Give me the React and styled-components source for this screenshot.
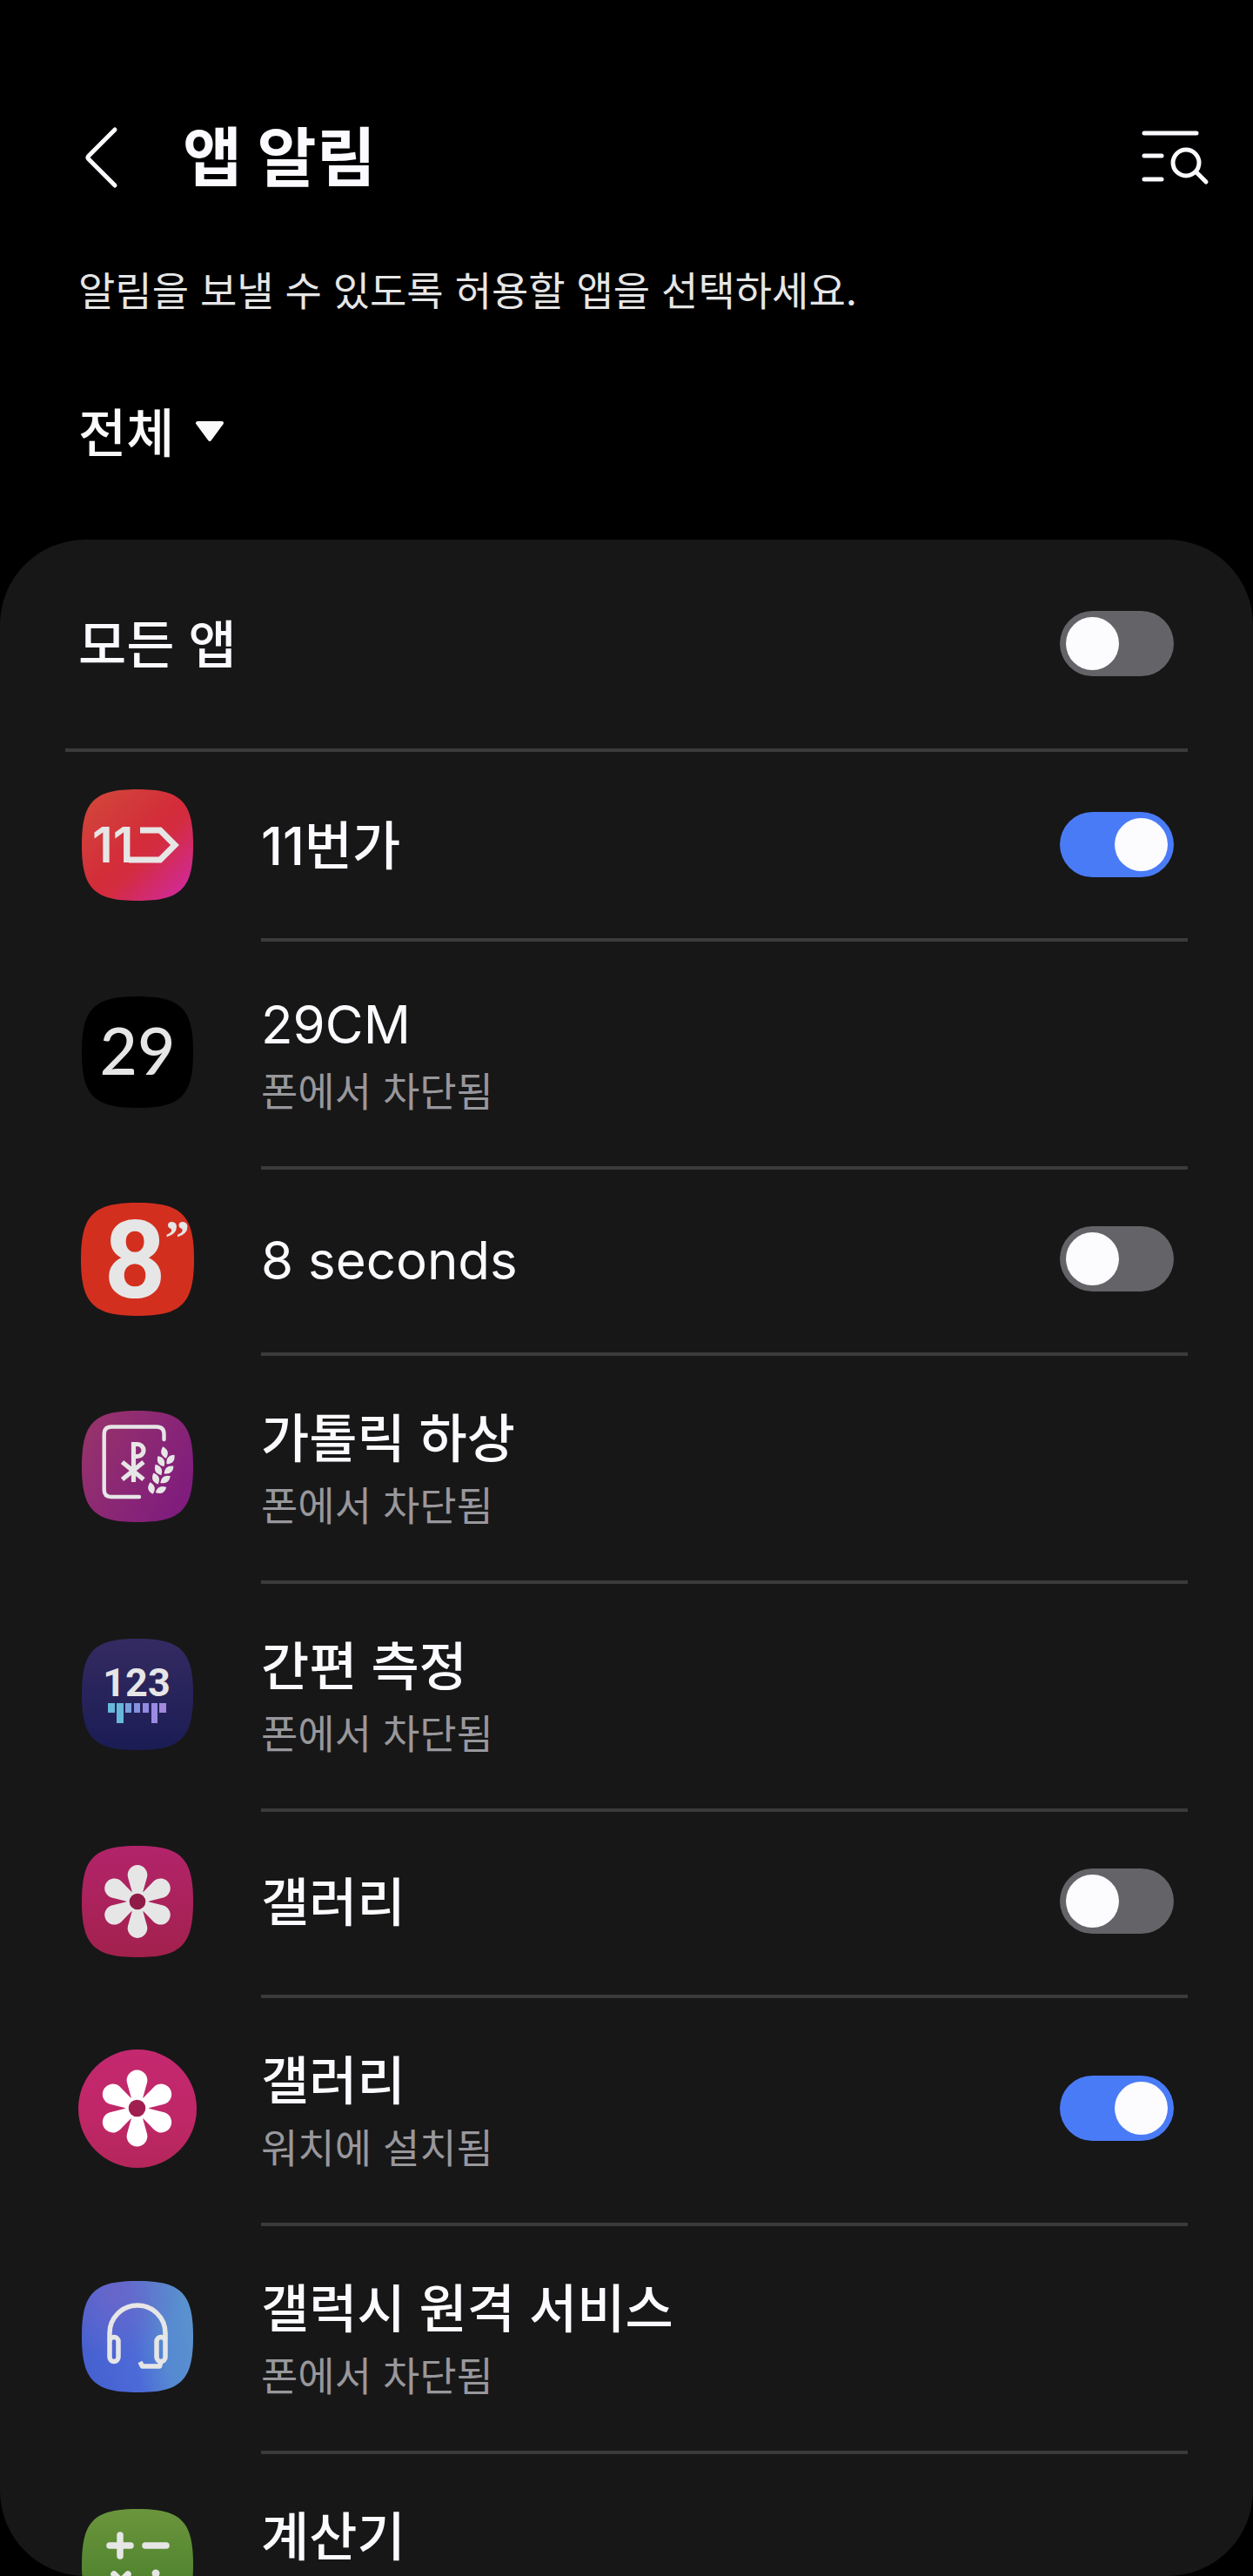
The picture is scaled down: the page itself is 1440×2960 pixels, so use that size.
import React, { useState } from 'react';
import styled, { createGlobalStyle } from 'styled-components';

const GlobalStyle = createGlobalStyle`
  *, *::before, *::after { box-sizing: border-box; }
  body {
    margin: 0;
    background: #000;
    color: #fbfaff;
    font-family: Inter, "Noto Sans CJK KR", sans-serif;
  }
`;

const Screen = styled.div`
  display: flex;
  flex-direction: column;
  height: 100vh;
  background: #000;
`;

const Header = styled.header`
  display: flex;
  align-items: center;
  gap: 72px;
  padding: 120px 48px 0 96px;
`;

const IconButton = styled.button`
  display: flex;
  padding: 0;
  border: 0;
  background: none;
  color: #fbfaff;
  cursor: pointer;
`;

const Title = styled.h1`
  flex: 1;
  margin: 0;
  font-size: 74px;
  font-weight: 700;
  line-height: 122px;
`;

const Description = styled.p`
  margin: 0;
  padding: 58px 90px 0;
  color: #e6e6e6;
  font-size: 46px;
  line-height: 68px;
`;

const Filter = styled.label`
  display: flex;
  align-items: center;
  align-self: flex-start;
  gap: 24px;
  padding: 84px 90px 76px;
`;

const FilterSelect = styled.select`
  appearance: none;
  field-sizing: content;
  padding: 0;
  border: 0;
  background: none;
  color: #fafafa;
  font-family: inherit;
  font-size: 60px;
  font-weight: 500;
  line-height: 92px;
`;

const Panel = styled.main`
  flex: 1;
  min-height: 0;
  overflow-y: auto;
  scrollbar-width: none;
  border-radius: 98px;
  background: #171717;
`;

const MasterRow = styled.div`
  display: flex;
  align-items: center;
  justify-content: space-between;
  height: 240px;
  padding: 0 91px 2px 90px;
`;

const Rule = styled.hr`
  height: 4px;
  margin: 0 75px;
  border: 0;
  background: #3b3b3b;
`;

const List = styled.ul`
  margin: 0;
  padding: 0;
  list-style: none;
`;

const Row = styled.li`
  display: flex;
  gap: 74px;
  height: ${(p) => (p.$tall ? 262 : 214)}px;
  padding: 0 75px 0 90px;
`;

const IconCell = styled.div`
  display: flex;
  flex: none;
  align-items: center;
  justify-content: center;
  width: 136px;
`;

const RowBody = styled.div`
  display: flex;
  flex: 1;
  align-items: center;
  justify-content: space-between;
  padding: 0 16px 6px 0;
  border-top: 4px solid #3b3b3b;

  ${Row}:first-child & {
    border-top-color: transparent;
  }
`;

const Label = styled.label`
  display: block;
  padding-top: 4px;
  font-size: 60px;
  font-weight: ${(p) => (p.$latin ? 400 : 500)};
  line-height: 88px;
`;

const Note = styled.p`
  min-height: 66px;
  margin: 0;
  color: #98979c;
  font-size: 46px;
  line-height: 66px;
`;

const Switch = styled.input`
  appearance: none;
  display: flex;
  flex: none;
  width: 131px;
  height: 75px;
  margin: 0;
  padding: 7px;
  border-radius: 38px;
  background: #646367;
  cursor: pointer;

  &::before {
    content: "";
    width: 61px;
    height: 61px;
    border-radius: 50%;
    background: #fcfcff;
  }

  &:checked {
    justify-content: flex-end;
    background: #4a7bf7;
  }
`;

const Art = styled.svg`
  display: block;
  flex: none;
  overflow: visible;
`;

const SQUIRCLE =
  'M64 0C114 0 128 14 128 64C128 114 114 128 64 128C14 128 0 114 0 64C0 14 14 0 64 0Z';

function Tile({ size = 128, fill, children }) {
  return (
    <Art width={size} height={size} viewBox="0 0 128 128" aria-hidden="true">
      {children[0]}
      <path d={SQUIRCLE} fill={fill} />
      {children.slice(1)}
    </Art>
  );
}

function ElevenStreetIcon() {
  return (
    <Tile fill="url(#eleven)">
      <defs key="d">
        <linearGradient id="eleven" x1="0.1" y1="0.1" x2="0.9" y2="0.9">
          <stop offset="0" stopColor="#d2443a" />
          <stop offset="0.5" stopColor="#d32c3a" />
          <stop offset="0.62" stopColor="#d32c40" />
          <stop offset="1" stopColor="#d12a93" />
        </linearGradient>
      </defs>
      <text key="t" x="12" y="84" fill="#e6e6e6" fontFamily="Inter, sans-serif" fontSize="56" fontWeight="600">11</text>
      <path key="p" d="M67 47H90L107 64L90 81H54" fill="none" stroke="#e6e6e6" strokeWidth="7" />
    </Tile>
  );
}

function TwentyNineIcon() {
  return (
    <Tile fill="#000">
      <defs key="d" />
      <text key="t" x="64" y="90" textAnchor="middle" fill="#e6e6e6" fontFamily="Lato, sans-serif" fontSize="75" fontWeight="500">29</text>
    </Tile>
  );
}

function EightSecondsIcon() {
  return (
    <Tile size={130} fill="#d32f1f">
      <defs key="d" />
      <text key="a" x="61" y="107" textAnchor="middle" fill="#e6e6e6" fontFamily="Roboto, sans-serif" fontSize="122" fontWeight="700">8</text>
      <text key="b" x="109" y="59" textAnchor="middle" fill="#e6e6e6" fontFamily="'Liberation Serif', serif" fontSize="56" fontWeight="700">”</text>
    </Tile>
  );
}

const LEAVES = [
  [95, 48, 75],
  [91, 58, 60],
  [102, 56, -50],
  [88, 68, 62],
  [100, 68, -38],
  [85, 78, 68],
  [96, 79, -34],
  [80, 89, 78],
  [91, 91, -26],
];

function CatholicIcon() {
  return (
    <Tile fill="url(#catholic)">
      <defs key="d">
        <linearGradient id="catholic" x1="0" y1="0.2" x2="1" y2="0.8">
          <stop offset="0" stopColor="#97336b" />
          <stop offset="1" stopColor="#7e1b7e" />
        </linearGradient>
      </defs>
      <g key="g" fill="none" stroke="#e6e6e6" strokeLinecap="round">
        <path d="M94.500 33V27Q94.500 18.500 86 18.500H34Q25.700 18.500 25.700 27V91Q25.700 99 34 99H66" strokeWidth="4.400" />
        <path d="M59.500 82V38.500H64A7 7 0 0 1 64 52.500H60" strokeWidth="5.200" strokeLinecap="butt" />
        <path d="M46.500 59L71 79M71 59L46.500 79" strokeWidth="5.200" strokeLinecap="butt" />
      </g>
      <g key="l" fill="#e6e6e6">
        {LEAVES.map(([x, y, a]) => (
          <path key={`${x}-${y}`} d="M-7 0Q0 -7.500 7 0Q0 7.500 -7 0Z" transform={`translate(${x} ${y}) rotate(${a})`} />
        ))}
      </g>
    </Tile>
  );
}

const BARS = [
  [30, 8, 11, '#66b9d8'],
  [40, 8, 23, '#66b9d8'],
  [50, 7, 11, '#78a0dc'],
  [60, 7, 11, '#8590e0'],
  [70, 7, 11, '#908be0'],
  [80, 7, 23, '#9a8be0'],
  [89, 8, 11, '#a388dc'],
];

function MeasureIcon() {
  return (
    <Tile fill="url(#measure)">
      <defs key="d">
        <linearGradient id="measure" x1="0" y1="0" x2="0" y2="1">
          <stop offset="0" stopColor="#342b62" />
          <stop offset="1" stopColor="#1b1c54" />
        </linearGradient>
      </defs>
      <text key="t" x="63" y="66" textAnchor="middle" fill="#e6e6e6" fontFamily="Roboto, sans-serif" fontSize="45" fontWeight="700">123</text>
      <g key="g">
        {BARS.map(([x, w, h, fill]) => (
          <rect key={x} x={x} y="74" width={w} height={h} fill={fill} />
        ))}
      </g>
    </Tile>
  );
}

function Flower({ petals, core }) {
  return (
    <g>
      <g fill={petals}>
        {[0, 60, 120, 180, 240, 300].map((a) => (
          <path key={a} d="M-6.200 -11L-11 -28A11.300 11.300 0 1 1 11 -28L6.200 -11Z" transform={`rotate(${a})`} />
        ))}
        <circle r="13" />
      </g>
      <circle r="9.300" fill={core} />
    </g>
  );
}

function GalleryIcon() {
  return (
    <Tile fill="url(#gallery)">
      <defs key="d">
        <linearGradient id="gallery" x1="0" y1="0" x2="0" y2="1">
          <stop offset="0" stopColor="#b2246a" />
          <stop offset="0.5" stopColor="#ab225c" />
          <stop offset="1" stopColor="#a2214c" />
        </linearGradient>
      </defs>
      <g key="g" transform="translate(64 64)">
        <Flower petals="#e6e6e6" core="#8f1c46" />
      </g>
    </Tile>
  );
}

function WatchGalleryIcon() {
  return (
    <Art width="136" height="136" viewBox="0 0 136 136" aria-hidden="true">
      <defs>
        <linearGradient id="watch" x1="0" y1="0" x2="0" y2="1">
          <stop offset="0" stopColor="#c4286f" />
          <stop offset="0.6" stopColor="#bf2767" />
          <stop offset="1" stopColor="#b4265a" />
        </linearGradient>
      </defs>
      <circle cx="68" cy="68" r="68" fill="url(#watch)" />
      <g transform="translate(67.500 67.500) scale(1.050)">
        <Flower petals="#fff" core="#a11f50" />
      </g>
    </Art>
  );
}

function RemoteIcon() {
  return (
    <Tile fill="url(#remote)">
      <defs key="d">
        <linearGradient id="remote" x1="0" y1="0.600" x2="1" y2="0.400">
          <stop offset="0" stopColor="#4660d0" />
          <stop offset="0.45" stopColor="#4d6bd8" />
          <stop offset="0.7" stopColor="#5588d2" />
          <stop offset="1" stopColor="#5a92ce" />
        </linearGradient>
        <radialGradient id="remoteGlow" cx="0.3" cy="0.1" r="0.6">
          <stop offset="0" stopColor="#6c66c8" stopOpacity="0.9" />
          <stop offset="1" stopColor="#6c66c8" stopOpacity="0" />
        </radialGradient>
      </defs>
      <path key="o" d={SQUIRCLE} fill="url(#remoteGlow)" />
      <g key="g" fill="none" stroke="#e6e6e6" strokeWidth="5.500" strokeLinejoin="round">
        <path d="M32 68V60A32 32 0 0 1 96 60V68" />
        <rect x="32" y="64.500" width="10" height="28" rx="5" />
        <rect x="86" y="64.500" width="10" height="28" rx="5" />
        <path d="M91 92L89.500 98H69.500L67 93" />
      </g>
    </Tile>
  );
}

function CalculatorIcon() {
  return (
    <Tile fill="url(#calc)">
      <defs key="d">
        <linearGradient id="calc" x1="0" y1="0" x2="0" y2="1">
          <stop offset="0" stopColor="#6b953c" />
          <stop offset="1" stopColor="#427a28" />
        </linearGradient>
      </defs>
      <path
        key="p"
        d="M44 30V54M32 42H56M73 42H97M37 75L53 91M53 75L37 91M73 85H97"
        stroke="#e6e6e6"
        strokeWidth="7.500"
        strokeLinecap="round"
      />
      <circle key="a" cx="85" cy="74" r="4.500" fill="#e6e6e6" />
      <circle key="b" cx="85" cy="96" r="4.500" fill="#e6e6e6" />
    </Tile>
  );
}

const APPS = [
  { id: 'eleven-street', name: '11번가', icon: ElevenStreetIcon, on: true },
  { id: 'twentynine', name: '29CM', latin: true, note: '폰에서 차단됨', icon: TwentyNineIcon },
  { id: 'eight-seconds', name: '8 seconds', latin: true, icon: EightSecondsIcon, on: false },
  { id: 'catholic', name: '가톨릭 하상', note: '폰에서 차단됨', icon: CatholicIcon },
  { id: 'measure', name: '간편 측정', note: '폰에서 차단됨', icon: MeasureIcon },
  { id: 'gallery', name: '갤러리', icon: GalleryIcon, on: false },
  { id: 'watch-gallery', name: '갤러리', note: '워치에 설치됨', icon: WatchGalleryIcon, on: true },
  { id: 'remote', name: '갤럭시 원격 서비스', note: '폰에서 차단됨', icon: RemoteIcon },
  { id: 'calculator', name: '계산기', note: '', icon: CalculatorIcon },
];

function Toggle({ id, initial }) {
  const [on, setOn] = useState(initial);
  return (
    <Switch id={id} type="checkbox" role="switch" checked={on} onChange={() => setOn(!on)} />
  );
}

function AppRow({ app }) {
  const Icon = app.icon;
  const switchable = app.on !== undefined;
  const hasNote = app.note !== undefined;
  return (
    <Row $tall={hasNote}>
      <IconCell>
        <Icon />
      </IconCell>
      <RowBody>
        <div>
          <Label
            as={switchable ? 'label' : 'span'}
            htmlFor={switchable ? app.id : undefined}
            $latin={app.latin}
          >
            {app.name}
          </Label>
          {hasNote && <Note>{app.note}</Note>}
        </div>
        {switchable && <Toggle id={app.id} initial={app.on} />}
      </RowBody>
    </Row>
  );
}

export default function App() {
  return (
    <Screen>
      <GlobalStyle />
      <Header>
        <IconButton type="button" aria-label="뒤로">
          <Art width="42" height="72" viewBox="0 0 42 72" fill="none" stroke="currentColor" strokeWidth="5" strokeLinecap="round" strokeLinejoin="round">
            <path d="M36 4L6 34Q4 36 6 38L36 68" />
          </Art>
        </IconButton>
        <Title>앱 알림</Title>
        <IconButton type="button" aria-label="검색">
          <Art width="80" height="64" viewBox="0 0 80 64" fill="none" stroke="currentColor" strokeWidth="5" strokeLinecap="round">
            <path d="M3 4H63M3 30H23M3 57H23M63 49L74 60" />
            <circle cx="51" cy="38" r="15" />
          </Art>
        </IconButton>
      </Header>
      <Description>알림을 보낼 수 있도록 허용할 앱을 선택하세요.</Description>
      <Filter>
        <FilterSelect aria-label="앱 필터">
          <option>전체</option>
        </FilterSelect>
        <Art width="34" height="28" viewBox="0 0 34 28" aria-hidden="true">
          <path d="M3 2H31L17 21Z" fill="#fafafa" stroke="#fafafa" strokeWidth="4" strokeLinejoin="round" />
        </Art>
      </Filter>
      <Panel>
        <MasterRow>
          <Label htmlFor="all-apps">모든 앱</Label>
          <Toggle id="all-apps" initial={false} />
        </MasterRow>
        <Rule />
        <List>
          {APPS.map((app) => (
            <AppRow key={app.id} app={app} />
          ))}
        </List>
      </Panel>
    </Screen>
  );
}
